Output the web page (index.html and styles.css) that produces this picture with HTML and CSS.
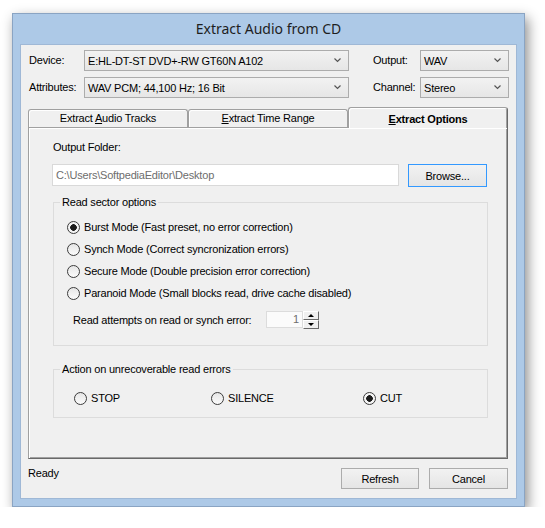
FILE: index.html
```html
<!DOCTYPE html>
<html lang="en">
<head>
  <meta charset="UTF-8" />
  <title>Extract Audio from CD</title>
  <link rel="stylesheet" href="styles.css">
</head>
<body>
  <div class="window">
    <div class="titlebar">Extract Audio from CD</div>

    <div class="client">
      <div class="params">
        <span class="lbl">Device:</span>
        <div class="combo">
          <span>E:HL-DT-ST DVD+-RW GT60N A102</span>
          <svg width="7" height="5" viewBox="0 0 7 5"><polyline points="0.5,0.5 3.5,3.5 6.5,0.5" fill="none" stroke="#555" stroke-width="1.2"/></svg>
        </div>
        <span class="lbl lbl-right">Output:</span>
        <div class="combo">
          <span>WAV</span>
          <svg width="7" height="5" viewBox="0 0 7 5"><polyline points="0.5,0.5 3.5,3.5 6.5,0.5" fill="none" stroke="#555" stroke-width="1.2"/></svg>
        </div>

        <span class="lbl">Attributes:</span>
        <div class="combo">
          <span>WAV PCM; 44,100 Hz; 16 Bit</span>
          <svg width="7" height="5" viewBox="0 0 7 5"><polyline points="0.5,0.5 3.5,3.5 6.5,0.5" fill="none" stroke="#555" stroke-width="1.2"/></svg>
        </div>
        <span class="lbl lbl-right">Channel:</span>
        <div class="combo">
          <span>Stereo</span>
          <svg width="7" height="5" viewBox="0 0 7 5"><polyline points="0.5,0.5 3.5,3.5 6.5,0.5" fill="none" stroke="#555" stroke-width="1.2"/></svg>
        </div>
      </div>

      <div class="tabs">
        <div class="tab">Extract <u>A</u>udio Tracks</div>
        <div class="tab"><u>E</u>xtract Time Range</div>
        <div class="tab active"><u>E</u>xtract Options</div>
      </div>

      <div class="panel">
        <div class="caption">Output Folder:</div>
        <div class="folder-row">
          <div class="textbox">C:\Users\SoftpediaEditor\Desktop</div>
          <button class="btn btn-default">Browse...</button>
        </div>

        <fieldset class="group group-sector">
          <legend>Read sector options</legend>
          <div class="sector-opts">
            <label class="radio-row"><input type="radio" name="mode" checked> Burst Mode (Fast preset, no error correction)</label>
            <label class="radio-row"><input type="radio" name="mode"> Synch Mode (Correct syncronization errors)</label>
            <label class="radio-row"><input type="radio" name="mode"> Secure Mode (Double precision error correction)</label>
            <label class="radio-row"><input type="radio" name="mode"> Paranoid Mode (Small blocks read, drive cache disabled)</label>
            <div class="attempts">
              <span class="attempts-lbl">Read attempts on read or synch error:</span>
              <div class="spin">
                <div class="spin-value">1</div>
                <div class="spin-btns">
                  <div class="spin-btn"><span class="tri-up"></span></div>
                  <div class="spin-btn"><span class="tri-down"></span></div>
                </div>
              </div>
            </div>
          </div>
        </fieldset>

        <fieldset class="group group-action">
          <legend>Action on unrecoverable read errors</legend>
          <div class="action-opts">
            <label class="radio-row act-stop"><input type="radio" name="act"> STOP</label>
            <label class="radio-row act-silence"><input type="radio" name="act"> SILENCE</label>
            <label class="radio-row"><input type="radio" name="act" checked> CUT</label>
          </div>
        </fieldset>
      </div>

      <div class="statusbar">
        <span class="status">Ready</span>
        <button class="btn btn-refresh">Refresh</button>
        <button class="btn btn-cancel">Cancel</button>
      </div>
    </div>
  </div>
</body>
</html>
```

FILE: styles.css
```css
body {
  margin: 0;
  padding: 13px 0 0 12px;
  background: #fff;
  font-family: 'Liberation Sans', Arial, sans-serif;
  font-size: 11px;
  letter-spacing: -0.2px;
  color: #000;
}

.window {
  width: 513px;
  height: 494px;
  box-sizing: border-box;
  background: #adc9e7;
  border: 1px solid #8aa4c3;
  padding: 0 7px 7px 7px;
  display: flex;
  flex-direction: column;
  box-shadow: 3px 5px 12px rgba(0, 0, 0, 0.45);
}

.titlebar {
  height: 30px;
  line-height: 30px;
  text-align: center;
  font-family: 'Noto Sans', 'Open Sans', sans-serif;
  font-size: 14px;
  letter-spacing: 0;
  color: #1e1e1e;
}

.client {
  flex: 1;
  background: #f0f0f0;
  border: 1px solid #9fb8d6;
  display: flex;
  flex-direction: column;
}

/* top parameters */
.params {
  display: grid;
  grid-template-columns: 55px 265px 71px 89px;
  grid-template-rows: 21px 21px;
  row-gap: 6px;
  padding: 5px 0 0 8px;
}

.lbl {
  line-height: 21px;
}

.lbl-right {
  margin-left: 24px;
}

.combo {
  box-sizing: border-box;
  height: 21px;
  border: 1px solid #acacac;
  background: linear-gradient(#f2f2f2, #e6e6e6);
  display: flex;
  align-items: center;
  justify-content: space-between;
  padding: 0 7px 0 3px;
}

/* tabs */
.tabs {
  display: flex;
  align-items: flex-end;
  height: 20px;
  margin-top: 9px;
  padding-left: 7px;
}

.tab {
  box-sizing: border-box;
  width: 160px;
  height: 18px;
  line-height: 16px;
  text-align: center;
  border: 1px solid #a0a0a0;
  border-bottom: none;
  border-radius: 3px 3px 0 0;
  background: #f0f0f0;
  box-shadow: inset 1px 1px 0 #fff;
}

.tab.active {
  height: 21px;
  margin-bottom: -1px;
  position: relative;
  z-index: 1;
  font-weight: bold;
  line-height: 22px;
  border-right-color: #696969;
  box-shadow: inset 1px 1px 0 #fff, inset -1px 0 0 #a0a0a0;
}

.panel {
  box-sizing: border-box;
  width: 480px;
  height: 332px;
  margin-left: 7px;
  border: 1px solid #a0a0a0;
  border-right-color: #696969;
  border-bottom-color: #696969;
  box-shadow: inset 1px 1px 0 #fff, inset -1px -1px 0 #a0a0a0;
  padding: 13px 0 0 24px;
}

.caption {
  line-height: 13px;
}

.folder-row {
  display: flex;
  align-items: flex-start;
  gap: 9px;
  margin-top: 10px;
  margin-left: -1px;
}

.textbox {
  box-sizing: border-box;
  width: 347px;
  height: 22px;
  line-height: 20px;
  border: 1px solid #d9d9d9;
  background: #fff;
  color: #6d6d6d;
  padding-left: 3px;
}

.btn {
  box-sizing: border-box;
  height: 21px;
  border: 1px solid #acacac;
  background: linear-gradient(#f2f2f2, #e5e5e5);
  font-family: inherit;
  font-size: 11px;
  letter-spacing: -0.2px;
  color: #000;
  padding: 0;
}

.btn-default {
  width: 79px;
  height: 23px;
  border-color: #3399ff;
}

/* group boxes */
.group {
  box-sizing: border-box;
  width: 435px;
  margin: 0;
  padding: 0;
  border: 1px solid #dcdcdc;
}

.group legend {
  margin-left: 6px;
  padding: 0 2px;
  line-height: 14px;
}

.group-sector {
  margin-top: 8px;
}

.group-action {
  margin-top: 16px;
}

.sector-opts {
  padding: 7px 0 16px 13px;
}

.radio-row {
  display: flex;
  align-items: center;
  height: 22px;
}

.radio-row input {
  appearance: none;
  -webkit-appearance: none;
  box-sizing: border-box;
  width: 13px;
  height: 13px;
  margin: 0 4px 0 0;
  border: 1px solid #3c3c3c;
  border-radius: 50%;
  background: linear-gradient(#e6e6e6, #fbfbfb);
}

.radio-row input:checked {
  background: radial-gradient(circle, #1c1c1c 3px, #f4f4f4 3.6px);
}

.attempts {
  display: flex;
  align-items: center;
  height: 18px;
  margin-top: 7px;
}

.attempts-lbl {
  width: 193px;
  margin-left: 6px;
}

.spin {
  display: flex;
  align-items: flex-start;
}

.spin-value {
  box-sizing: border-box;
  width: 37px;
  height: 17px;
  line-height: 15px;
  border: 1px solid #dcdcdc;
  background: #fbfbfb;
  color: #6d6d6d;
  text-align: right;
  padding-right: 3px;
}

.spin-btns {
  display: flex;
  flex-direction: column;
}

.spin-btn {
  box-sizing: border-box;
  width: 16px;
  height: 9px;
  background: #f0f0f0;
  border: 1px solid #696969;
  border-top-color: #fff;
  border-left-color: #fff;
  display: flex;
  align-items: center;
  justify-content: center;
}

.tri-up {
  width: 0;
  height: 0;
  border-left: 3px solid transparent;
  border-right: 3px solid transparent;
  border-bottom: 3px solid #000;
}

.tri-down {
  width: 0;
  height: 0;
  border-left: 3px solid transparent;
  border-right: 3px solid transparent;
  border-top: 3px solid #000;
}

.action-opts {
  display: flex;
  padding: 11px 0 8px 20px;
}

.act-stop {
  width: 137px;
}

.act-silence {
  width: 152px;
}

/* status bar */
.statusbar {
  display: flex;
  align-items: flex-start;
  padding: 8px 8px 0 7px;
}

.status {
  flex: 1;
  line-height: 13px;
}

.btn-refresh {
  width: 78px;
  margin-top: 1px;
  margin-right: 10px;
}

.btn-cancel {
  width: 79px;
  margin-top: 1px;
}
```
